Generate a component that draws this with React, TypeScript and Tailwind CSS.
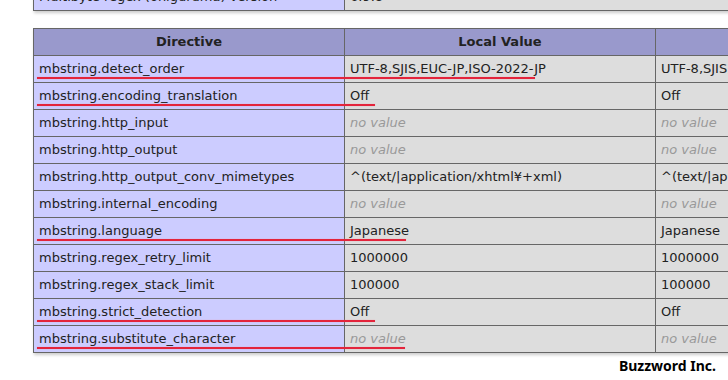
import React from "react";

type Row = { name: string; local: string; master: string; noval?: boolean; line?: number };

const rows: Row[] = [
  { name: "mbstring.detect_order", local: "UTF-8,SJIS,EUC-JP,ISO-2022-JP", master: "UTF-8,SJIS,EUC-JP,ISO-2022-JP", line: 498 },
  { name: "mbstring.encoding_translation", local: "Off", master: "Off", line: 338 },
  { name: "mbstring.http_input", local: "no value", master: "no value", noval: true },
  { name: "mbstring.http_output", local: "no value", master: "no value", noval: true },
  { name: "mbstring.http_output_conv_mimetypes", local: "^(text/|application/xhtml¥+xml)", master: "^(text/|application/xhtml¥+xml)" },
  { name: "mbstring.internal_encoding", local: "no value", master: "no value", noval: true },
  { name: "mbstring.language", local: "Japanese", master: "Japanese", line: 369 },
  { name: "mbstring.regex_retry_limit", local: "1000000", master: "1000000" },
  { name: "mbstring.regex_stack_limit", local: "100000", master: "100000" },
  { name: "mbstring.strict_detection", local: "Off", master: "Off", line: 338 },
  { name: "mbstring.substitute_character", local: "no value", master: "no value", noval: true, line: 368 },
];

const font = { fontFamily: '"DejaVu Sans", Verdana, sans-serif' };

export default function App() {
  return (
    <div className="w-[728px] h-[380px] overflow-hidden bg-white text-[#222]" style={font}>
      <div className="ml-[33px] mt-[-17px] w-[1000px]">
        <table className="border-collapse table-fixed w-[933px] shadow-[1px_2px_3px_#ccc] text-[13px]">
          <tbody>
            <tr className="h-[27px]">
              <td className="w-[311px] border border-[#666] bg-[#ccccff] px-[5px] whitespace-nowrap overflow-hidden">Multibyte regex (oniguruma) version</td>
              <td className="border border-[#666] bg-[#dddddd] px-[5px]" colSpan={2}>6.9.8</td>
            </tr>
          </tbody>
        </table>
        <table className="mt-[17px] border-collapse table-fixed w-[933px] shadow-[1px_2px_3px_#ccc] text-[13px]">
          <thead>
            <tr className="h-[27px] bg-[#9999cc]">
              <th className="w-[311px] border border-[#666] font-bold text-center">Directive</th>
              <th className="w-[311px] border border-[#666] font-bold text-center">Local Value</th>
              <th className="w-[311px] border border-[#666] font-bold text-center">Master Value</th>
            </tr>
          </thead>
          <tbody>
            {rows.map((r) => (
              <tr key={r.name} className="h-[27px]">
                <td className="relative border border-[#666] bg-[#ccccff] px-[5px] whitespace-nowrap">
                  {r.name}
                  {r.line ? (
                    <span
                      className="absolute left-[3px] bottom-[3px] h-[2px] bg-[#e3243b] shadow-[0_0_1px_#f08090] z-10"
                      style={{ width: r.line }}
                    />
                  ) : null}
                </td>
                <td className={`border border-[#666] bg-[#dddddd] px-[5px] whitespace-nowrap ${r.noval ? "italic text-[#999]" : ""}`}>{r.local}</td>
                <td className={`border border-[#666] bg-[#dddddd] px-[5px] whitespace-nowrap ${r.noval ? "italic text-[#999]" : ""}`}>{r.master}</td>
              </tr>
            ))}
          </tbody>
        </table>
      </div>
      <div className="w-[716px] text-right font-bold text-[14px] mt-[2px] text-black" style={{ fontFamily: '"Noto Sans", sans-serif' }}>Buzzword Inc.</div>
    </div>
  );
}
